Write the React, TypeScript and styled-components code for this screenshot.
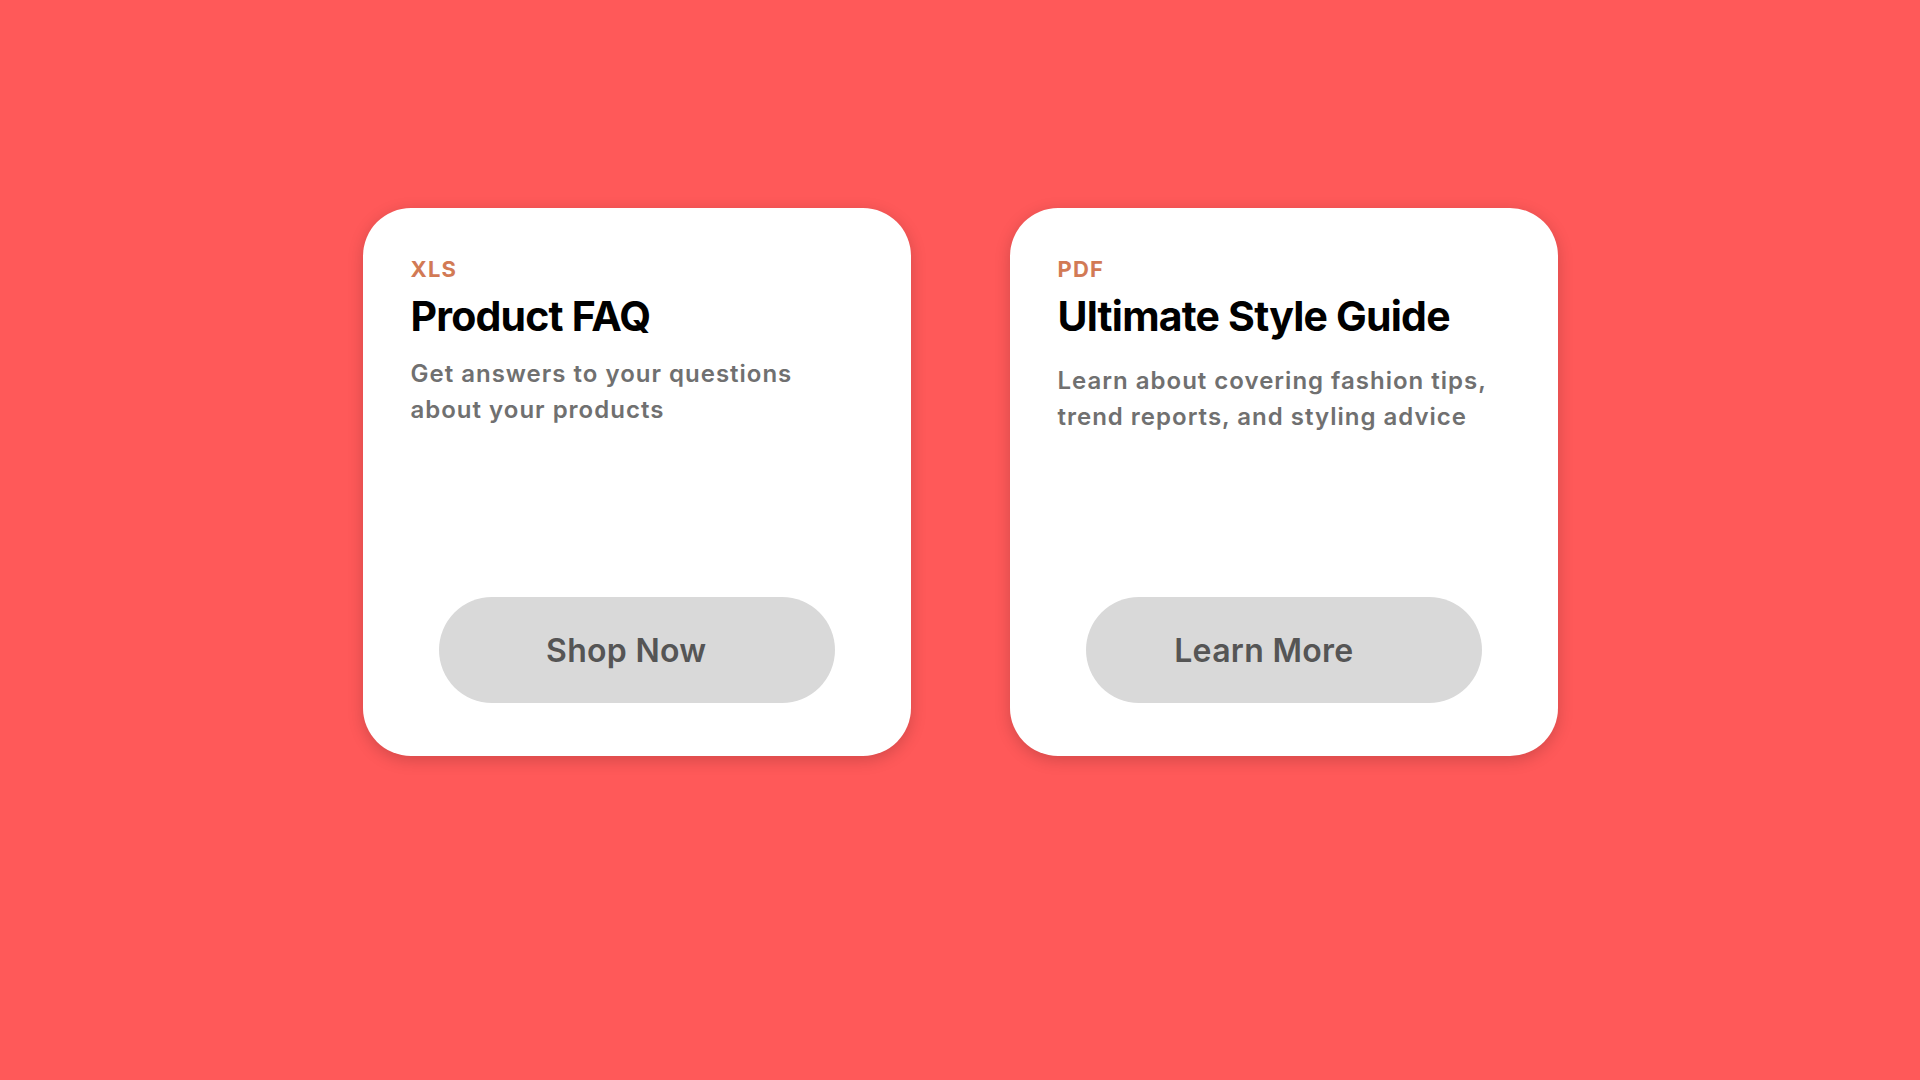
import React from 'react';
import styled, { createGlobalStyle } from 'styled-components';

const GlobalStyle = createGlobalStyle`
  html, body {
    margin: 0;
    padding: 0;
    background-color: #ff5959;
    font-family: Inter, "Noto Sans", "Liberation Sans", sans-serif;
  }
`;

const Page = styled.main`
  min-height: 1080px;
  box-sizing: border-box;
  padding-top: 208px;
  display: flex;
  justify-content: center;
  align-items: flex-start;
  gap: 99px;
`;

const Card = styled.article`
  width: 548px;
  height: 548px;
  box-sizing: border-box;
  padding: 48px 48px 53px;
  background-color: #fff;
  border-radius: 48px;
  box-shadow: 0 4px 16px rgba(0, 0, 0, 0.18);
  display: flex;
  flex-direction: column;
`;

const Label = styled.span`
  font-size: 22px;
  line-height: 26px;
  font-weight: 700;
  letter-spacing: 1.2px;
  color: #d27a55;
`;

const Title = styled.h2`
  margin: 10px 0 0;
  font-size: 41px;
  line-height: 48px;
  font-weight: 700;
  color: #000;
  letter-spacing: -0.8px;
`;

const Description = styled.p<{ $offset: number }>`
  margin: ${(p) => p.$offset}px 0 0;
  font-size: 24px;
  line-height: 36px;
  font-weight: 600;
  letter-spacing: 1px;
  color: #707070;
`;

const ActionButton = styled.button`
  margin-top: auto;
  align-self: center;
  width: 396px;
  height: 106px;
  padding: 0 128px 0 0;
  border: none;
  border-radius: 53px;
  background-color: #d9d9d9;
  color: #555;
  font-family: inherit;
  font-size: 32px;
  font-weight: 600;
  letter-spacing: 0.3px;
  text-align: right;
  cursor: pointer;
`;

interface Resource {
  type: string;
  title: string;
  description: string;
  action: string;
  offset: number;
}

const resources: Resource[] = [
  {
    type: 'XLS',
    title: 'Product FAQ',
    description: 'Get answers to your questions about your products',
    action: 'Shop Now',
    offset: 16,
  },
  {
    type: 'PDF',
    title: 'Ultimate Style Guide',
    description: 'Learn about covering fashion tips, trend reports, and styling advice',
    action: 'Learn More',
    offset: 23,
  },
];

const App: React.FC = () => (
  <>
    <GlobalStyle />
    <Page>
      {resources.map((r) => (
        <Card key={r.title}>
          <Label>{r.type}</Label>
          <Title>{r.title}</Title>
          <Description $offset={r.offset}>{r.description}</Description>
          <ActionButton type="button">{r.action}</ActionButton>
        </Card>
      ))}
    </Page>
  </>
);

export default App;
